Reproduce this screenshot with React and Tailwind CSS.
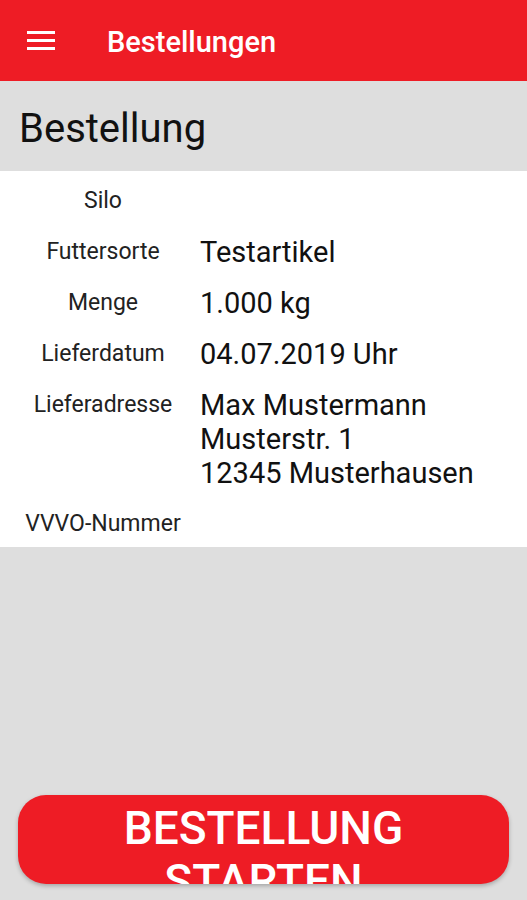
import React from "react";

const rows = [
  { label: "Silo", value: [] },
  { label: "Futtersorte", value: ["Testartikel"] },
  { label: "Menge", value: ["1.000 kg"] },
  { label: "Lieferdatum", value: ["04.07.2019 Uhr"] },
  { label: "Lieferadresse", value: ["Max Mustermann", "Musterstr. 1", "12345 Musterhausen"] },
  { label: "VVVO-Nummer", value: [] },
];

export default function App() {
  return (
    <div className="w-[527px] h-[900px] bg-[#dedede] flex flex-col overflow-hidden" style={{ fontFamily: "Roboto, 'Noto Sans', sans-serif" }}>
      <header className="h-[81px] bg-[#ee1c25] flex items-center shrink-0">
        <div className="ml-[27px] w-[28px] flex flex-col gap-[5px]">
          <div className="h-[3px] bg-white" />
          <div className="h-[3px] bg-white" />
          <div className="h-[3px] bg-white" />
        </div>
        <h1 className="ml-[52px] pt-[4px] text-white text-[29px] font-medium leading-none">Bestellungen</h1>
      </header>
      <div className="h-[90px] flex items-center px-[19px] pt-[6px] shrink-0">
        <h2 className="text-[40px] text-[#111] leading-none">Bestellung</h2>
      </div>
      <div className="bg-white pt-[4px]">
        {rows.map((r) => (
          <div key={r.label} className="flex py-[8.5px] last:pb-[6px]">
            <div className="w-[200px] pl-[6px] text-center text-[23px] text-[#222] leading-[34px] shrink-0">{r.label}</div>
            <div className="text-[29px] text-[#111] leading-[34px] min-h-[34px]">
              {r.value.map((v) => (
                <div key={v}>{v}</div>
              ))}
            </div>
          </div>
        ))}
      </div>
      <div className="flex-1" />
      <div className="px-[18px] pb-[16px]">
        <button className="w-full h-[89px] rounded-[28px] bg-[#ee1c25] overflow-hidden pt-[7px] px-[20px] flex justify-center items-start shadow-[0_2px_4px_rgba(0,0,0,0.25)]">
          <span className="text-white text-[46px] font-medium leading-[53px] text-center w-[300px]">BESTELLUNG STARTEN</span>
        </button>
      </div>
    </div>
  );
}
